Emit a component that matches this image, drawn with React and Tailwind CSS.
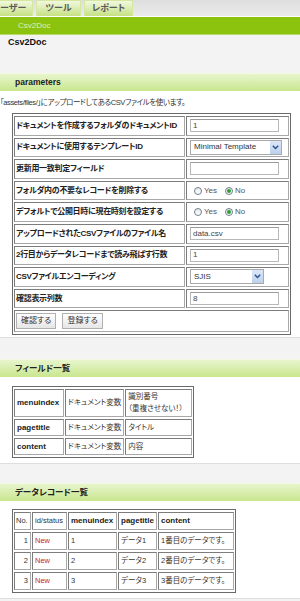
import React from 'react';

const font = "font-['Liberation_Sans','Noto_Sans_CJK_JP',sans-serif] [font-feature-settings:'palt']";

const Tab = ({ children, className = '' }) => (
  <div
    className={`h-[16px] flex items-center justify-center rounded-t-[2px] border border-b-0 border-[#d4e8a0] bg-gradient-to-b from-[#f1f8de] to-[#c6e182] text-[9px] font-bold text-[#5a5a5a] ${className}`}
  >
    {children}
  </div>
);

const Panel = ({ title, children, className = '' }) => (
  <section className={className}>
    <h2 className="h-[18px] flex items-center pl-[15px] bg-gradient-to-b from-[#e8f5cc] to-[#c9e68e] border-t border-[#f2f9e2] text-[8.5px] font-bold text-[#222]">
      {title}
    </h2>
    <div className="bg-white border-b border-[#dedede]">{children}</div>
  </section>
);

const TextBox = ({ value }) => (
  <div className="w-[89px] h-[13px] border border-[#b8b8b8] border-t-[#9a9a9a] bg-white px-[2px] flex items-center text-[8px] text-[#444]">
    {value}
  </div>
);

const SelectBox = ({ value, w }) => (
  <div className={`${w} h-[15px] border border-[#a9a9a9] bg-white flex items-center justify-between pl-[3px] text-[8px] text-[#333]`}>
    <span>{value}</span>
    <span className="w-[11px] h-[13px] bg-gradient-to-b from-[#dde8f7] to-[#bcd0ee] flex items-center justify-center">
      <svg width="7" height="5" viewBox="0 0 7 5">
        <path d="M0.8 0.8 L3.5 3.6 L6.2 0.8" fill="none" stroke="#2d4f8a" strokeWidth="1.4" />
      </svg>
    </span>
  </div>
);

const Radio = ({ checked }) => (
  <span className="w-[8px] h-[8px] rounded-full border border-[#6f7f90] bg-gradient-to-b from-[#e9e9e9] to-white flex items-center justify-center">
    {checked && <span className="w-[4px] h-[4px] rounded-full bg-[#2ea02e]" />}
  </span>
);

const YesNo = () => (
  <div className="flex items-center pl-[4px] text-[8px] text-[#555]">
    <Radio />
    <span className="ml-[2px] mr-[8px]">Yes</span>
    <Radio checked />
    <span className="ml-[2px]">No</span>
  </div>
);

const params = [
  ['ドキュメントを作成するフォルダのドキュメントID', <TextBox value="1" />],
  ['ドキュメントに使用するテンプレートID', <SelectBox value="Minimal Template" w="w-[92px]" />],
  ['更新用一致判定フィールド', <TextBox value="" />],
  ['フォルダ内の不要なレコードを削除する', <YesNo />],
  ['デフォルトで公開日時に現在時刻を設定する', <YesNo />],
  ['アップロードされたCSVファイルのファイル名', <TextBox value="data.csv" />],
  ['2行目からデータレコードまで読み飛ばす行数', <TextBox value="1" />],
  ['CSVファイルエンコーディング', <SelectBox value="SJIS" w="w-[74px]" />],
  ['確認表示列数', <TextBox value="8" />],
];

const cell = 'border border-[#7c7c7c] border-r-[#a8a8a8] border-b-[#a8a8a8]';
const grid = 'border border-[#6a6a6a] border-separate [border-spacing:1px_2px] leading-[10px]';

const fields = [
  ['menuindex', 'ドキュメント変数', '識別番号\n（重複させない！）'],
  ['pagetitle', 'ドキュメント変数', 'タイトル'],
  ['content', 'ドキュメント変数', '内容'],
];

const records = [
  [1, 'New', '1', 'データ1', '1番目のデータです。'],
  [2, 'New', '2', 'データ2', '2番目のデータです。'],
  [3, 'New', '3', 'データ3', '3番目のデータです。'],
];

export default function App() {
  return (
    <div className={`w-[300px] h-[601px] overflow-hidden bg-[#f3f3f3] ${font}`}>
      {/* top tabs */}
      <nav className="h-[17px] flex items-end gap-[3px] bg-gradient-to-b from-[#dedede] to-[#ebebeb] border-b border-white overflow-hidden">
        <Tab className="w-[48px] ml-[-15px] shrink-0">ユーザー</Tab>
        <Tab className="w-[45px] shrink-0">ツール</Tab>
        <Tab className="w-[49px] shrink-0">レポート</Tab>
      </nav>
      <div className="h-[18px] bg-[#8cc30e] border-b border-[#b9db6e] flex items-center pl-[18px] text-[8px] text-[#dff0bd]">
        Csv2Doc
      </div>
      <h1 className="pl-[8px] pt-[2px] leading-[10px] text-[9px] font-bold text-[#111]">Csv2Doc</h1>

      <Panel title="parameters" className="mt-[26px]">
        <p className="pt-[7px] leading-[10px] text-[7.5px] tracking-[-0.4px] text-[#333] whitespace-nowrap">
          「assets/files/」にアップロードしてあるCSVファイルを使います。
        </p>
        <div className="pl-[12px] pt-[5px] pb-[2px]">
          <table className={`${grid} w-[279px]`}>
            <tbody>
              {params.map(([label, ctrl]) => (
                <tr key={label}>
                  <td className={`${cell} w-[171px] h-[19.6px] px-[1px] text-[8px] font-bold text-[#222] whitespace-nowrap tracking-[-0.3px]`}>
                    {label}
                  </td>
                  <td className={`${cell} pl-[3px]`}>{ctrl}</td>
                </tr>
              ))}
              <tr>
                <td colSpan={2} className={`${cell} h-[22px] px-[1px]`}>
                  <div className="flex gap-[6px]">
                    <button className="h-[16px] px-[4px] border border-[#b0b0b0] bg-gradient-to-b from-white to-[#e6e6e6] text-[8px] text-[#333]">
                      確認する
                    </button>
                    <button className="h-[16px] px-[4px] border border-[#b0b0b0] bg-gradient-to-b from-white to-[#e6e6e6] text-[8px] text-[#333]">
                      登録する
                    </button>
                  </div>
                </td>
              </tr>
            </tbody>
          </table>
        </div>
      </Panel>

      <Panel title="フィールド一覧" className="mt-[21px]">
        <div className="pl-[12px] pt-[9px] pb-[5px]">
          <table className={`${grid} text-[7.5px] text-[#333]`}>
            <tbody>
              {fields.map(([a, b, c]) => (
                <tr key={a}>
                  <td className={`${cell} w-[50px] h-[17px] px-[2px] text-[8px] font-bold text-[#222]`}>{a}</td>
                  <td className={`${cell} w-[56px] px-[2px] whitespace-nowrap`}>{b}</td>
                  <td className={`${cell} w-[67px] px-[2px] py-[1px] whitespace-pre leading-[12px]`}>{c}</td>
                </tr>
              ))}
            </tbody>
          </table>
        </div>
      </Panel>

      <Panel title="データレコード一覧" className="mt-[19px]">
        <div className="pl-[12px] pt-[8px] pb-[5px]">
          <table className={`${grid} text-[7.5px] text-[#333]`}>
            <tbody>
              <tr>
                <td className={`${cell} w-[17px] h-[18px] px-[1px]`}>No.</td>
                <td className={`${cell} w-[35px] px-[2px]`}>id/status</td>
                <td className={`${cell} w-[49px] px-[2px] text-[8px] font-bold text-[#222]`}>menuindex</td>
                <td className={`${cell} w-[39px] px-[2px] text-[8px] font-bold text-[#222]`}>pagetitle</td>
                <td className={`${cell} w-[76px] px-[2px] text-[8px] font-bold text-[#222]`}>content</td>
              </tr>
              {records.map(([n, s, m, t, c]) => (
                <tr key={n}>
                  <td className={`${cell} h-[18px] px-[2px] text-right`}>{n}</td>
                  <td className={`${cell} px-[2px] text-[#c4262e]`}>{s}</td>
                  <td className={`${cell} px-[2px]`}>{m}</td>
                  <td className={`${cell} px-[2px] whitespace-nowrap`}>{t}</td>
                  <td className={`${cell} px-[2px] whitespace-nowrap`}>{c}</td>
                </tr>
              ))}
            </tbody>
          </table>
        </div>
      </Panel>
    </div>
  );
}
